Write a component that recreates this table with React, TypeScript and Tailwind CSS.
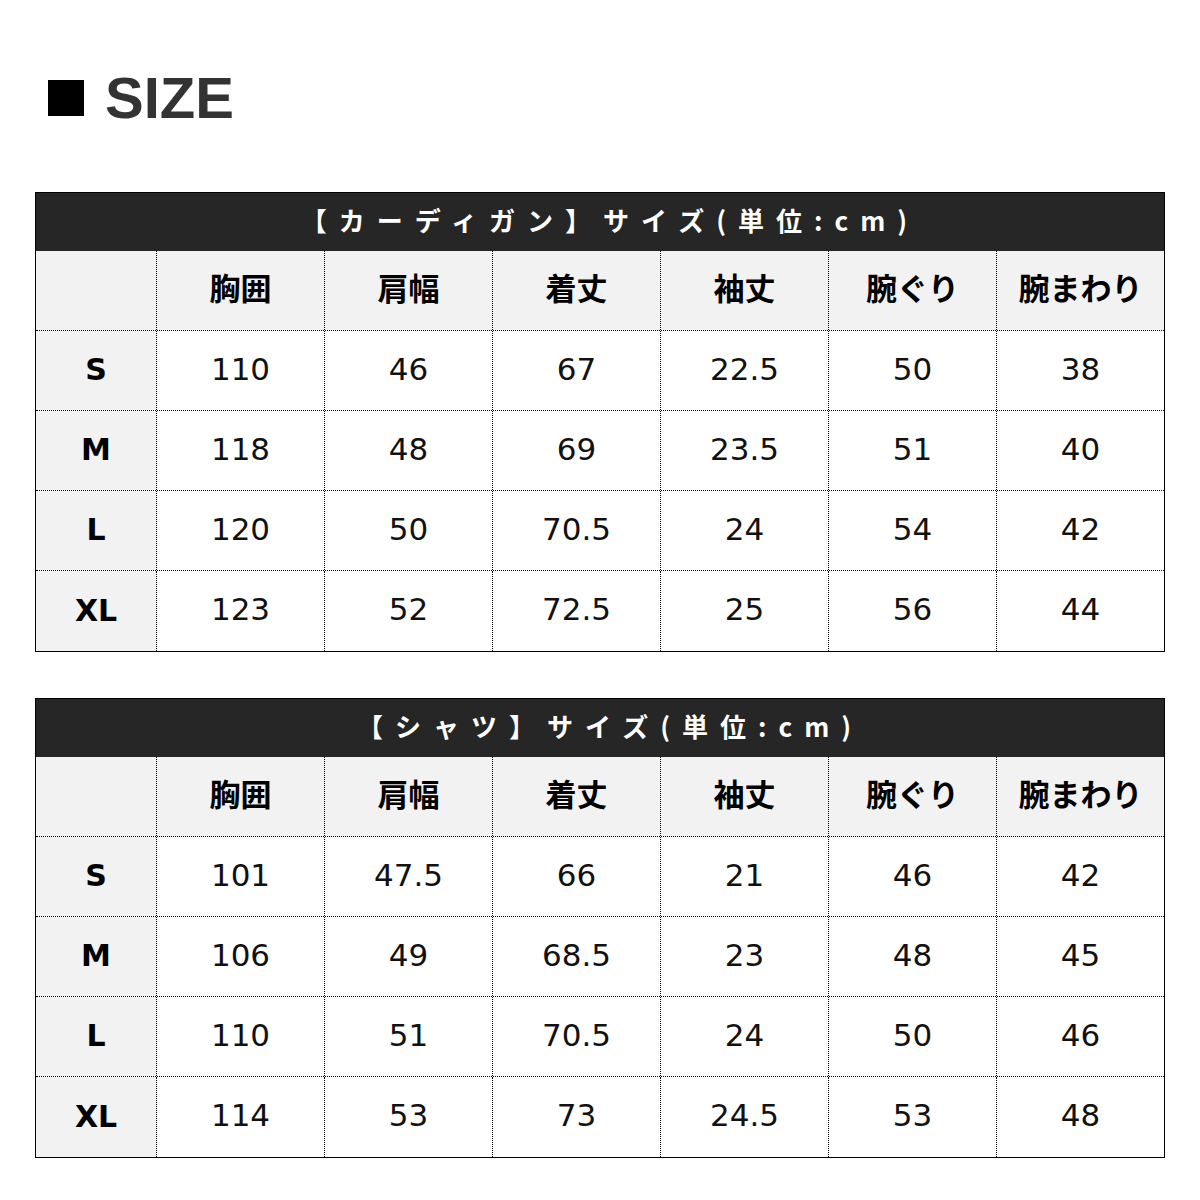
const cols = ['胸囲', '肩幅', '着丈', '袖丈', '腕ぐり', '腕まわり'];

interface SizeTable {
  title: string;
  rows: { size: string; values: string[] }[];
}

const tables: SizeTable[] = [
  {
    title: '【カーディガン】サイズ(単位:cm)',
    rows: [
      { size: 'S', values: ['110', '46', '67', '22.5', '50', '38'] },
      { size: 'M', values: ['118', '48', '69', '23.5', '51', '40'] },
      { size: 'L', values: ['120', '50', '70.5', '24', '54', '42'] },
      { size: 'XL', values: ['123', '52', '72.5', '25', '56', '44'] },
    ],
  },
  {
    title: '【シャツ】サイズ(単位:cm)',
    rows: [
      { size: 'S', values: ['101', '47.5', '66', '21', '46', '42'] },
      { size: 'M', values: ['106', '49', '68.5', '23', '48', '45'] },
      { size: 'L', values: ['110', '51', '70.5', '24', '50', '46'] },
      { size: 'XL', values: ['114', '53', '73', '24.5', '53', '48'] },
    ],
  },
];

const jp = "font-['Noto_Sans_CJK_JP',sans-serif]";
const num = "font-['DejaVu_Sans','Noto_Sans_CJK_JP',sans-serif]";

function Table({ table }: { table: SizeTable }) {
  return (
    <div className="w-[1130px] border border-black">
      <div
        className={`flex h-[58px] items-center justify-center bg-[#262626] pb-[5px] pl-[20px] text-[26px] font-bold tracking-[12px] text-white ${jp}`}
      >
        {table.title}
      </div>
      <div className="grid h-[80px] grid-cols-[121px_repeat(5,168px)_167px] border-b border-dotted border-black bg-[#f2f2f2]">
        <div className="border-r border-dotted border-black" />
        {cols.map((c, i) => (
          <div
            key={c}
            className={`flex items-center justify-center pb-[6px] text-[31px] font-bold text-black ${jp} ${
              i < cols.length - 1 ? 'border-r border-dotted border-black' : ''
            }`}
          >
            {c}
          </div>
        ))}
      </div>
      {table.rows.map((row, r) => (
        <div
          key={row.size}
          className={`grid h-[80px] grid-cols-[121px_repeat(5,168px)_167px] ${
            r < table.rows.length - 1 ? 'border-b border-dotted border-black' : ''
          }`}
        >
          <div
            className={`flex items-center justify-center border-r border-dotted border-black bg-[#f2f2f2] pb-[2px] text-[30px] font-bold text-black ${num}`}
          >
            {row.size}
          </div>
          {row.values.map((v, i) => (
            <div
              key={i}
              className={`flex items-center justify-center pb-[3px] text-[31px] text-[#111] ${num} ${
                i < row.values.length - 1 ? 'border-r border-dotted border-black' : ''
              }`}
            >
              {v}
            </div>
          ))}
        </div>
      ))}
    </div>
  );
}

export default function App() {
  return (
    <div className="min-h-[1200px] w-[1200px] bg-white pt-[80px]">
      <div className="flex h-[36px] items-center gap-[21px] pl-[48px]">
        <div className="h-[36px] w-[36px] bg-black" />
        <span className="font-['Liberation_Sans',sans-serif] text-[58px] leading-none font-bold text-[#333]">
          SIZE
        </span>
      </div>
      <div className="mt-[76px] flex flex-col gap-[46px] pl-[35px]">
        {tables.map((t) => (
          <Table key={t.title} table={t} />
        ))}
      </div>
    </div>
  );
}
